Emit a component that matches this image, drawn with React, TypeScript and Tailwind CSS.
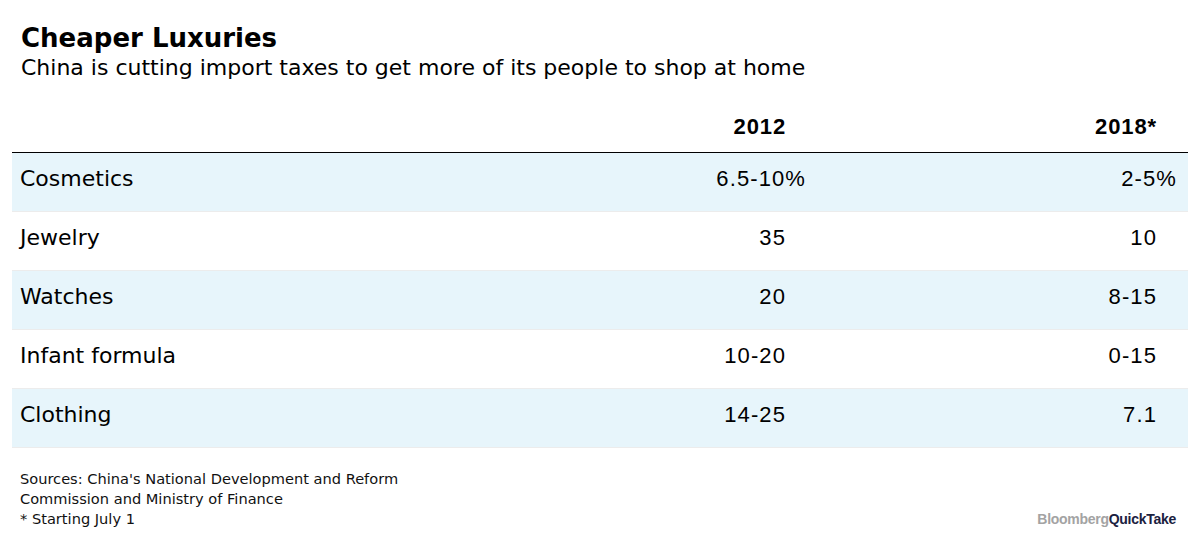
import React from 'react';

type Row = {
  label: string;
  y2012: string;
  y2018: string;
};

const rows: Row[] = [
  { label: 'Cosmetics', y2012: '6.5-10%', y2018: '2-5%' },
  { label: 'Jewelry', y2012: '35', y2018: '10' },
  { label: 'Watches', y2012: '20', y2018: '8-15' },
  { label: 'Infant formula', y2012: '10-20', y2018: '0-15' },
  { label: 'Clothing', y2012: '14-25', y2018: '7.1' },
];

const textFont = "font-['DejaVu_Sans',sans-serif]";
const numFont = "font-['Liberation_Sans',Arial,sans-serif]";

// percent sign hangs past the column edge, like the source chart
const Value = ({ v }: { v: string }) =>
  v.endsWith('%') ? (
    <>
      {v.slice(0, -1)}
      <span className="inline-block mr-[-20px]">%</span>
    </>
  ) : (
    <>{v}</>
  );

const App = () => (
  <div className="w-[1200px] h-[548px] bg-white text-black overflow-hidden">
    {/* heading */}
    <div className="pl-[21px] pt-[21px]">
      <h1 className={`${textFont} font-bold text-[26px] leading-[34px]`}>Cheaper Luxuries</h1>
      <p className={`${textFont} text-[22px] leading-[28px] mt-[-1px]`}>
        China is cutting import taxes to get more of its people to shop at home
      </p>
    </div>

    {/* table */}
    <div className="mx-[12px] mt-[34px]">
      <div className={`${numFont} flex items-end h-[37px] pb-[14px] border-b border-black font-bold text-[22px] leading-none tracking-[0.04em]`}>
        <div className="flex-1" />
        <div className="text-right">2012</div>
        <div className="w-[402px] pr-[31px] text-right">2018*</div>
      </div>
      {rows.map((row, idx) => (
        <div
          key={row.label}
          className={`flex items-center h-[59px] pb-[8px] border-b border-[#ececec] ${idx % 2 === 0 ? 'bg-[#e7f5fb]' : 'bg-white'}`}
        >
          <div className={`${textFont} flex-1 pl-[8px] text-[22px]`}>{row.label}</div>
          <div className={`${numFont} text-right text-[22px] tracking-[0.05em]`}>
            <Value v={row.y2012} />
          </div>
          <div className={`${numFont} w-[402px] pr-[31px] text-right text-[22px] tracking-[0.05em]`}>
            <Value v={row.y2018} />
          </div>
        </div>
      ))}
    </div>

    {/* footer */}
    <div className="flex items-end justify-between pl-[20px] pr-[24px] mt-[21px]">
      <div className={`${textFont} text-[14.6px] leading-[20px] text-[#111]`}>
        <p>Sources: China's National Development and Reform</p>
        <p>Commission and Ministry of Finance</p>
        <p>* Starting July 1</p>
      </div>
      <div className={`${numFont} font-bold text-[14px] tracking-[-0.02em] leading-none mb-[3px]`}>
        <span className="text-[#a3a3a3]">Bloomberg</span>
        <span className="text-[#1b2140]">QuickTake</span>
      </div>
    </div>
  </div>
);

export default App;
